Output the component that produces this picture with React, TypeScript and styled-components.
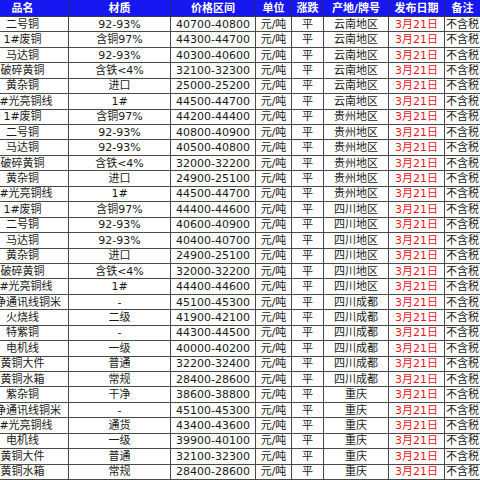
import React from 'react';
import styled, { createGlobalStyle } from 'styled-components';

const GlobalStyle = createGlobalStyle`
  html, body {
    margin: 0;
    padding: 0;
    background: #ffffff;
    overflow: hidden;
  }
`;

const Viewport = styled.div`
  width: 480px;
  height: 480px;
  overflow: hidden;
  background: #ffffff;
`;

const Grid = styled.div`
  display: grid;
  grid-template-columns: 92px 102px 85px 36px 32px 65px 56px 36px;
  grid-template-rows: 17px repeat(30, 1fr);
  width: 504px;
  height: 480px;
  margin-left: -23px;
  font-family: 'DejaVu Sans', 'Noto Sans CJK SC', sans-serif;
  font-size: 11px;
  line-height: 1;
`;

const HeaderCell = styled.div`
  display: flex;
  align-items: center;
  justify-content: center;
  box-sizing: border-box;
  background: #1717f2;
  color: #ffffff;
  font-weight: 700;
  border-right: 1px solid #2a2a6a;
  border-bottom: 1px solid #3a3a3a;
  white-space: nowrap;
  overflow: hidden;
`;

const Cell = styled.div<{ $red?: boolean }>`
  display: flex;
  align-items: center;
  justify-content: center;
  box-sizing: border-box;
  color: ${({ $red }) => ($red ? '#f0141e' : '#1a1a1a')};
  border-right: 1px solid #4a4a4a;
  border-bottom: 1px solid #4a4a4a;
  white-space: nowrap;
  overflow: hidden;
`;

const headers = ['品名', '材质', '价格区间', '单位', '涨跌', '产地/牌号', '发布日期', '备注'];

type Row = [string, string, string, string];

const rows: Row[] = [
  ['二号铜', '92-93%', '40700-40800', '云南地区'],
  ['1#废铜', '含铜97%', '44300-44700', '云南地区'],
  ['马达铜', '92-93%', '40300-40600', '云南地区'],
  ['破碎黄铜', '含铁<4%', '32100-32300', '云南地区'],
  ['黄杂铜', '进口', '25000-25200', '云南地区'],
  ['1#光亮铜线', '1#', '44500-44700', '云南地区'],
  ['1#废铜', '含铜97%', '44200-44400', '贵州地区'],
  ['二号铜', '92-93%', '40800-40900', '贵州地区'],
  ['马达铜', '92-93%', '40500-40800', '贵州地区'],
  ['破碎黄铜', '含铁<4%', '32000-32200', '贵州地区'],
  ['黄杂铜', '进口', '24900-25100', '贵州地区'],
  ['1#光亮铜线', '1#', '44500-44700', '贵州地区'],
  ['1#废铜', '含铜97%', '44400-44600', '四川地区'],
  ['二号铜', '92-93%', '40600-40900', '四川地区'],
  ['马达铜', '92-93%', '40400-40700', '四川地区'],
  ['黄杂铜', '进口', '24900-25100', '四川地区'],
  ['破碎黄铜', '含铁<4%', '32000-32200', '四川地区'],
  ['1#光亮铜线', '1#', '44400-44600', '四川地区'],
  ['干净通讯线铜米', '-', '45100-45300', '四川成都'],
  ['火烧线', '二级', '41900-42100', '四川成都'],
  ['特紫铜', '-', '44300-44500', '四川成都'],
  ['电机线', '一级', '40000-40200', '四川成都'],
  ['黄铜大件', '普通', '32200-32400', '四川成都'],
  ['黄铜水箱', '常规', '28400-28600', '四川成都'],
  ['紫杂铜', '干净', '38600-38800', '重庆'],
  ['干净通讯线铜米', '-', '45100-45300', '重庆'],
  ['1#光亮铜线', '通货', '43400-43600', '重庆'],
  ['电机线', '一级', '39900-40100', '重庆'],
  ['黄铜大件', '普通', '32100-32300', '重庆'],
  ['黄铜水箱', '常规', '28400-28600', '重庆'],
];

export default function App() {
  return (
    <Viewport>
      <GlobalStyle />
      <Grid>
        {headers.map((h) => (
          <HeaderCell key={h}>{h}</HeaderCell>
        ))}
        {rows.map(([name, grade, price, origin], i) => (
          <React.Fragment key={i}>
            <Cell>{name}</Cell>
            <Cell>{grade}</Cell>
            <Cell>{price}</Cell>
            <Cell>元/吨</Cell>
            <Cell>平</Cell>
            <Cell>{origin}</Cell>
            <Cell $red>3月21日</Cell>
            <Cell>不含税</Cell>
          </React.Fragment>
        ))}
      </Grid>
    </Viewport>
  );
}
